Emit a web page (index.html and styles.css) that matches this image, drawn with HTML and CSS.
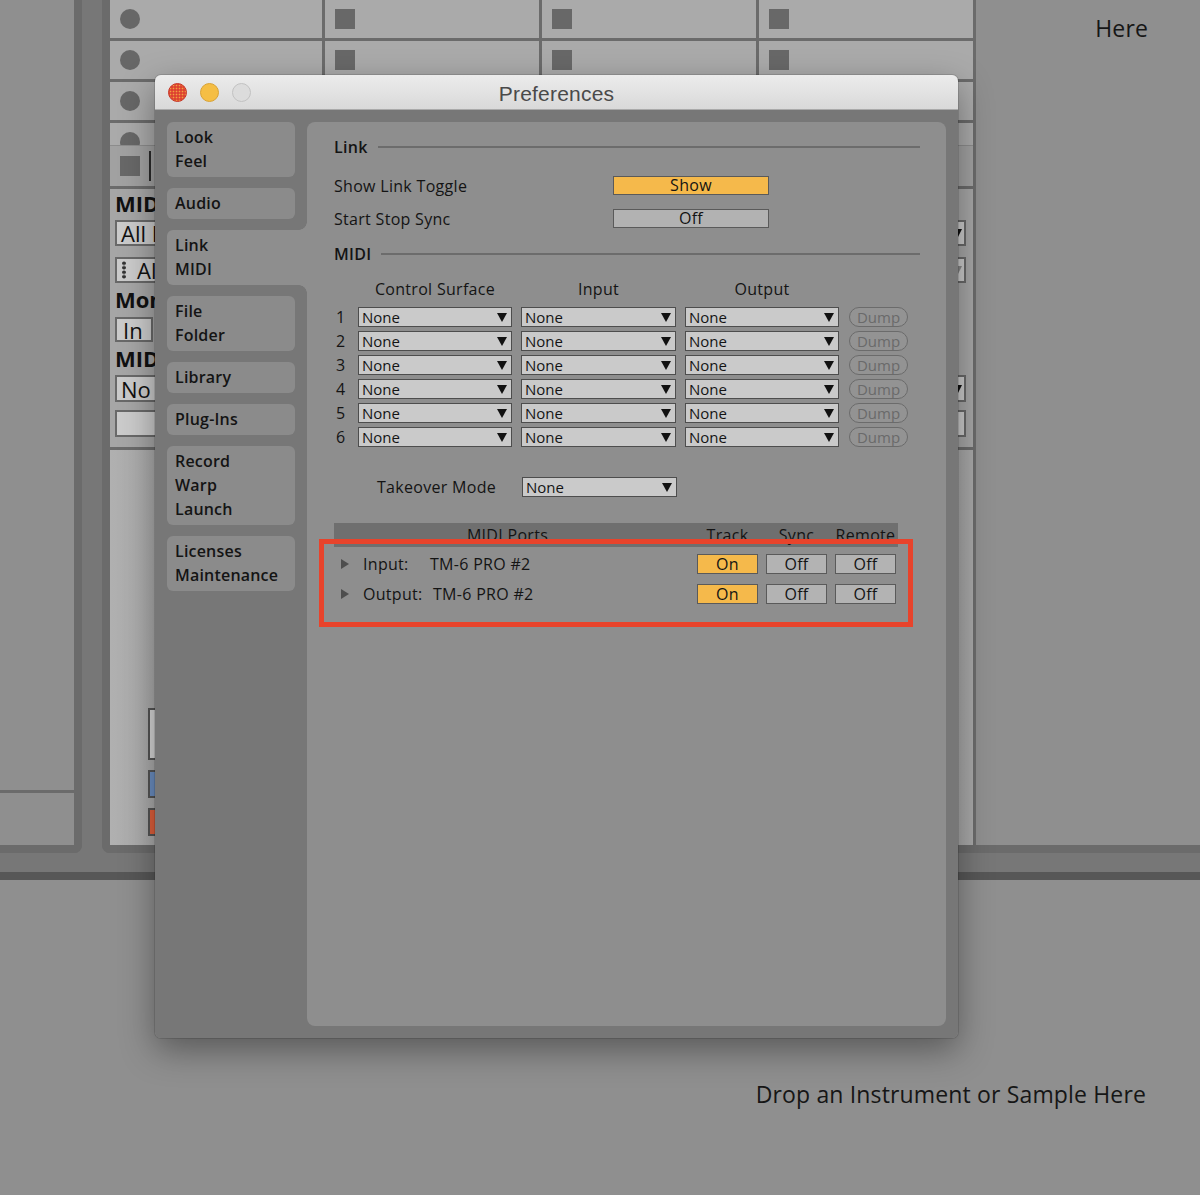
FILE: index.html
```html
<!DOCTYPE html>
<html>
<head>
<meta charset="utf-8">
<title>Preferences</title>
<link rel="stylesheet" href="styles.css">
</head>
<body>
<div class="screen">
  <div class="session">
    <div class="browser"><div class="browser-top"></div><div class="browser-bottom"></div></div>
    <div class="tracks">
      <div class="track first">
        <div class="slot"><span class="rec"></span></div>
        <div class="slot"><span class="rec"></span></div>
        <div class="slot"><span class="rec"></span></div>
        <div class="slot partial"><span class="rec"></span></div>
        <div class="stop-row"><span class="sq"></span><span class="bar"></span></div>
        <div class="io">
          <div class="io-label">MIDI From</div>
          <div class="io-box drop b1">All Ins</div>
          <div class="io-box drop b2"><span class="grip"></span>All Channels</div>
          <div class="io-label l2">Monitor</div>
          <div class="mon"><span class="io-box small">In</span><span class="io-box small">Auto</span><span class="io-box small">Off</span></div>
          <div class="io-label l3">MIDI To</div>
          <div class="io-box drop b3">No Output</div>
          <div class="io-box b4"></div>
        </div>
        <div class="mixer"><span class="fader"></span><span class="arm"></span><span class="recb"></span></div>
      </div>
      <div class="track">
        <div class="slot"><span class="sq"></span></div>
        <div class="slot"><span class="sq"></span></div>
        <div class="slot"><span class="sq"></span></div>
        <div class="slot partial"><span class="sq"></span></div>
        <div class="stop-row"><span class="sq"></span><span class="bar"></span></div>
        <div class="io">
          <div class="io-label"></div>
          <div class="io-box drop b1"></div>
          <div class="io-box drop b2"></div>
          <div class="io-label l2"></div>
          <div class="mon"><span class="io-box small"></span></div>
          <div class="io-label l3"></div>
          <div class="io-box drop b3"></div>
          <div class="io-box b4"></div>
        </div>
        <div class="mixer"><span class="fader"></span><span class="arm"></span><span class="recb"></span></div>
      </div>
      <div class="track">
        <div class="slot"><span class="sq"></span></div>
        <div class="slot"><span class="sq"></span></div>
        <div class="slot"><span class="sq"></span></div>
        <div class="slot partial"><span class="sq"></span></div>
        <div class="stop-row"><span class="sq"></span><span class="bar"></span></div>
        <div class="io">
          <div class="io-label"></div>
          <div class="io-box drop b1"></div>
          <div class="io-box drop b2"></div>
          <div class="io-label l2"></div>
          <div class="mon"><span class="io-box small"></span></div>
          <div class="io-label l3"></div>
          <div class="io-box drop b3"></div>
          <div class="io-box b4"></div>
        </div>
        <div class="mixer"><span class="fader"></span><span class="arm"></span><span class="recb"></span></div>
      </div>
      <div class="track">
        <div class="slot"><span class="sq"></span></div>
        <div class="slot"><span class="sq"></span></div>
        <div class="slot"><span class="sq"></span></div>
        <div class="slot partial"><span class="sq"></span></div>
        <div class="stop-row"><span class="sq"></span><span class="bar"></span></div>
        <div class="io">
          <div class="io-label"></div>
          <div class="io-box drop b1"></div>
          <div class="io-box drop b2 faded"></div>
          <div class="io-label l2"></div>
          <div class="mon"><span class="io-box small"></span></div>
          <div class="io-label l3"></div>
          <div class="io-box drop b3"></div>
          <div class="io-box b4"></div>
        </div>
        <div class="mixer"><span class="fader"></span><span class="arm"></span><span class="recb"></span></div>
      </div>
      <div class="drop-area"><span class="drop-text">Here</span></div>
    </div>
  </div>
  <div class="session-foot"></div>
  <div class="detail"><span class="drop-text">Drop an Instrument or Sample Here</span></div>

  <div class="prefs">
    <div class="titlebar">
      <div class="lights"><span class="light red"></span><span class="light yellow"></span><span class="light gray"></span></div>
      <div class="title">Preferences</div>
      <div></div>
    </div>
    <div class="pbody">
      <nav class="side">
        <div class="tab">Look<br>Feel</div>
        <div class="tab">Audio</div>
        <div class="tab active">Link<br>MIDI</div>
        <div class="tab">File<br>Folder</div>
        <div class="tab">Library</div>
        <div class="tab">Plug-Ins</div>
        <div class="tab tall">Record<br>Warp<br>Launch</div>
        <div class="tab">Licenses<br>Maintenance</div>
      </nav>
      <main class="panel">
        <div class="sect-head"><span class="sect-title">Link</span><span class="rule"></span></div>
        <div class="opt-row r1"><span class="opt-label">Show Link Toggle</span><span class="toggle on">Show</span></div>
        <div class="opt-row r2"><span class="opt-label">Start Stop Sync</span><span class="toggle">Off</span></div>
        <div class="sect-head midi"><span class="sect-title">MIDI</span><span class="rule"></span></div>
        <div class="cs-grid cs-head">
          <span></span><span class="colh">Control Surface</span><span class="colh">Input</span><span class="colh">Output</span><span></span>
        </div>
        <div class="cs-grid cs-rows">
          <span class="num">1</span><span class="dd">None</span><span class="dd">None</span><span class="dd">None</span><span class="dump">Dump</span>
          <span class="num">2</span><span class="dd">None</span><span class="dd">None</span><span class="dd">None</span><span class="dump">Dump</span>
          <span class="num">3</span><span class="dd">None</span><span class="dd">None</span><span class="dd">None</span><span class="dump">Dump</span>
          <span class="num">4</span><span class="dd">None</span><span class="dd">None</span><span class="dd">None</span><span class="dump">Dump</span>
          <span class="num">5</span><span class="dd">None</span><span class="dd">None</span><span class="dd">None</span><span class="dump">Dump</span>
          <span class="num">6</span><span class="dd">None</span><span class="dd">None</span><span class="dd">None</span><span class="dump">Dump</span>
        </div>
        <div class="takeover"><span class="to-label">Takeover Mode</span><span class="dd to-dd">None</span></div>
        <div class="ports">
          <div class="ports-head"><span class="ph-name">MIDI Ports</span><span class="ph-col">Track</span><span class="ph-col">Sync</span><span class="ph-col">Remote</span></div>
          <div class="port-row p1"><span class="tri"></span><span class="pl">Input:</span><span class="pn">TM-6 PRO #2</span><span class="pbtn on first">On</span><span class="pbtn">Off</span><span class="pbtn">Off</span></div>
          <div class="port-row p2"><span class="tri"></span><span class="pl out">Output:</span><span class="pn">TM-6 PRO #2</span><span class="pbtn on first">On</span><span class="pbtn">Off</span><span class="pbtn">Off</span></div>
          <div class="highlight"></div>
        </div>
      </main>
    </div>
  </div>
</div>
</body>
</html>
```
FILE: styles.css
```css
* { box-sizing: border-box; margin: 0; padding: 0; }
html, body { width: 1200px; height: 1195px; }
body {
  background: #8f8f8f;
  font-family: "Open Sans", "Noto Sans", sans-serif;
  color: #141414;
  overflow: hidden;
}
.screen { position: relative; width: 1200px; height: 1195px; }

/* ---------- background session view ---------- */
.session { display: flex; height: 853px; background: #777777; }
.browser {
  width: 82px; height: 853px; flex: none;
  border-right: 8px solid #6b6b6b; border-bottom: 8px solid #6b6b6b;
  border-bottom-right-radius: 8px;
  background: #8f8f8f;
  display: flex; flex-direction: column;
}
.browser-top { height: 793px; border-bottom: 3px solid #6b6b6b; }
.tracks {
  margin-left: 20px; flex: 1; min-width: 0;
  display: flex;
  border-left: 8px solid #6b6b6b; border-bottom: 8px solid #6b6b6b;
  border-bottom-left-radius: 8px;
  overflow: hidden;
}
.track {
  width: 217px; flex: none;
  border-right: 3px solid #6b6b6b;
  display: flex; flex-direction: column;
  background: #a9a9a9;
}
.track.first { width: 215px; }
.slot {
  height: 41px; border-bottom: 3px solid #6b6b6b;
  display: flex; align-items: center; padding-left: 10px;
  background: #aaaaaa;
}
.slot.partial { height: 22px; border-bottom: 0; align-items: flex-start; padding-top: 9px; overflow: hidden; }
.rec { width: 20px; height: 20px; border-radius: 50%; background: #676767; flex: none; }
.sq { width: 20px; height: 20px; background: #686868; flex: none; }
.stop-row {
  height: 44px; border-top: 1px solid #8c8c8c; border-bottom: 3px solid #6b6b6b;
  background: #a1a1a1;
  display: flex; align-items: center; padding-left: 10px; gap: 9px;
}
.bar { width: 2px; height: 30px; background: #2a2a2a; }
.io {
  height: 261px; border-bottom: 3px solid #6b6b6b;
  background: #a6a6a6;
  padding: 2px 7px 0 5px;
  display: flex; flex-direction: column;
}
.io-label { font-size: 22px; font-weight: 700; line-height: 24px; height: 24px; white-space: nowrap; color: #111; }
.io-box {
  height: 26px; border: 2px solid #696969; background: #cbcbcb;
  font-size: 22px; line-height: 22px; padding-left: 4px;
  white-space: nowrap; overflow: hidden; color: #111;
  display: flex; align-items: center;
}
.io-box.drop::after {
  content: ""; margin-left: auto; margin-right: 2px;
  border-left: 4px solid transparent; border-right: 4px solid transparent;
  border-top: 8px solid #111;
}
.io-box.faded::after { border-top-color: #888; }
.b1 { margin-top: 5px; }
.b2 { margin-top: 11px; }
.l2 { margin-top: 4px; }
.mon { margin-top: 6px; display: flex; gap: 4px; }
.io-box.small { height: 25px; min-width: 38px; padding: 0 6px; }
.l3 { margin-top: 4px; }
.b3 { margin-top: 5px; height: 27px; }
.b4 { margin-top: 8px; height: 27px; }
.grip {
  width: 6px; height: 18px; margin-right: 10px; flex: none;
  background: radial-gradient(circle, #333 1.6px, transparent 2px) 0 0 / 6px 4.5px;
}
.mixer {
  flex: 1; padding: 258px 0 0 38px;
  background: linear-gradient(90deg, #b0b0b0, #a6a6a6 40%, #a8a8a8);
  display: flex; flex-direction: column; gap: 10px;
}
.fader { width: 40px; height: 52px; border: 2px solid #555; background: #d6d6d6; }
.arm { width: 40px; height: 28px; border: 2px solid #555; background: #6b8fc2; }
.recb { width: 40px; height: 28px; border: 2px solid #555; background: #e0603c; }
.drop-area {
  flex: 1; min-width: 225px; background: #8f8f8f;
  display: flex; justify-content: flex-end; align-items: flex-start;
  padding: 13px 53px 0 0;
}
.drop-text { font-size: 23px; line-height: 30px; letter-spacing: 0.15px; color: #161616; white-space: nowrap; }
.session-foot { height: 27px; background: #777777; border-bottom: 8px solid #575757; }
.detail {
  height: 315px; display: flex; justify-content: flex-end;
  padding: 199px 54px 0 0;
}

/* ---------- Preferences window ---------- */
.prefs {
  position: absolute; left: 155px; top: 75px;
  width: 803px; height: 963px;
  border-radius: 6px; overflow: hidden;
  box-shadow: 0 12px 34px rgba(0,0,0,0.38), 0 0 0 1px rgba(0,0,0,0.12);
  display: flex; flex-direction: column;
}
.titlebar {
  height: 35px; flex: none;
  background: linear-gradient(#ececec, #d9d9d9);
  border-bottom: 1px solid #aaaaaa;
  display: grid; grid-template-columns: 1fr auto 1fr; align-items: center;
}
.lights { display: flex; gap: 13px; padding-left: 13px; }
.light { width: 19px; height: 19px; border-radius: 50%; }
.light.red {
  background-color: #de4331;
  background-image: radial-gradient(circle, #f2a340 0.7px, transparent 1.1px);
  background-size: 3px 3px;
  border: 1px solid #c7392a;
}
.light.yellow { background: #f5be44; border: 1px solid #d9a336; }
.light.gray { background: #dcdcdc; border: 1px solid #c2c2c2; }
.title {
  font-family: "Liberation Sans", Arial, sans-serif;
  font-size: 21px; color: #4a4a4a; letter-spacing: 0.2px;
  padding-top: 3px;
}
.pbody {
  flex: 1; display: flex; background: #777777;
  padding: 12px;
}
.side { width: 140px; flex: none; display: flex; flex-direction: column; gap: 11px; }
.tab {
  width: 128px; background: #8b8b8b; border-radius: 6px;
  padding: 3px 8px 4px;
  font-size: 16px; font-weight: 600; line-height: 24px; letter-spacing: 0.2px; color: #141414;
}
.tab.active {
  width: 140px; background: #8e8e8e;
  border-radius: 6px 0 0 6px;
  position: relative;
}
.tab.active::before, .tab.active::after {
  content: ""; position: absolute; right: 0; width: 8px; height: 8px;
}
.tab.active::before { top: -8px; background: radial-gradient(circle at 0 0, transparent 7.5px, #8e8e8e 8px); }
.tab.active::after { bottom: -8px; background: radial-gradient(circle at 0 100%, transparent 7.5px, #8e8e8e 8px); }

.panel {
  flex: 1; background: #8e8e8e; border-radius: 8px;
  padding: 15px 26px 0 27px;
  font-size: 16px; font-weight: 500; letter-spacing: 0.3px; color: #141414;
}
.sect-head { display: flex; align-items: center; height: 20px; }
.sect-title { font-weight: 600; margin-right: 10px; }
.rule { flex: 1; height: 2px; background: #6c6c6c; }
.sect-head.midi { margin-top: 16px; }
.opt-row { display: flex; align-items: center; height: 19px; }
.opt-row.r1 { margin-top: 19px; }
.opt-row.r2 { margin-top: 14px; }
.opt-label { width: 279px; }
.toggle {
  width: 156px; height: 19px; border: 1px solid #5a5a5a;
  background: #b2b2b2; text-align: center; line-height: 17px;
}
.toggle.on { background: #f5b94b; }
.cs-grid {
  display: grid;
  grid-template-columns: 15px 154px 155px 154px 60px;
  column-gap: 9px; row-gap: 4px;
}
.cs-head { margin-top: 15px; height: 20px; line-height: 20px; }
.colh { text-align: center; white-space: nowrap; }
.cs-rows { margin-top: 8px; grid-auto-rows: 20px; }
.num { padding-left: 2px; line-height: 20px; }
.dd {
  height: 20px; background: #cacaca; border: 1px solid #4d4d4d;
  padding-left: 3px; line-height: 18px;
  font-size: 15px; letter-spacing: 0;
  display: flex; align-items: center;
}
.dd::after {
  content: ""; margin-left: auto; margin-right: 4px;
  border-left: 5px solid transparent; border-right: 5px solid transparent;
  border-top: 9px solid #111;
}
.dump {
  height: 20px; border: 1px solid #6b6b6b; border-radius: 10px;
  background: #939393; color: #6a6a6a; text-align: center; line-height: 18px;
  font-size: 15px; letter-spacing: 0;
  margin-left: 1px;
}
.takeover { margin-top: 30px; display: flex; align-items: center; height: 20px; padding-left: 43px; }
.to-label { width: 145px; }
.to-dd { width: 155px; }
.ports { position: relative; margin-top: 26px; width: 564px; }
.ports-head {
  height: 24px; background: #6f6f6f;
  display: flex; align-items: center; padding-right: 2px; gap: 8px;
}
.ph-name { flex: 1; text-align: center; padding-right: 8px; }
.ph-col { width: 61px; text-align: center; }
.port-row { display: flex; align-items: center; height: 20px; padding: 0 2px 0 7px; gap: 8px; }
.port-row.p1 { margin-top: 7px; }
.port-row.p2 { margin-top: 10px; }
.tri {
  width: 0; height: 0; flex: none;
  border-top: 5px solid transparent; border-bottom: 5px solid transparent;
  border-left: 8px solid #4e4e4e;
  margin-right: 6px;
}
.pl { width: 59px; }
.pl.out { width: 62px; }
.pbtn {
  width: 61px; height: 20px; border: 1px solid #5a5a5a;
  background: #b3b3b3; text-align: center; line-height: 18px;
}
.pbtn.on { background: #f5b94b; }
.pbtn.first { margin-left: auto; }
.highlight {
  position: absolute; left: -15px; top: 16px;
  width: 594px; height: 88px;
  border: 5px solid #e8432b;
}
```
